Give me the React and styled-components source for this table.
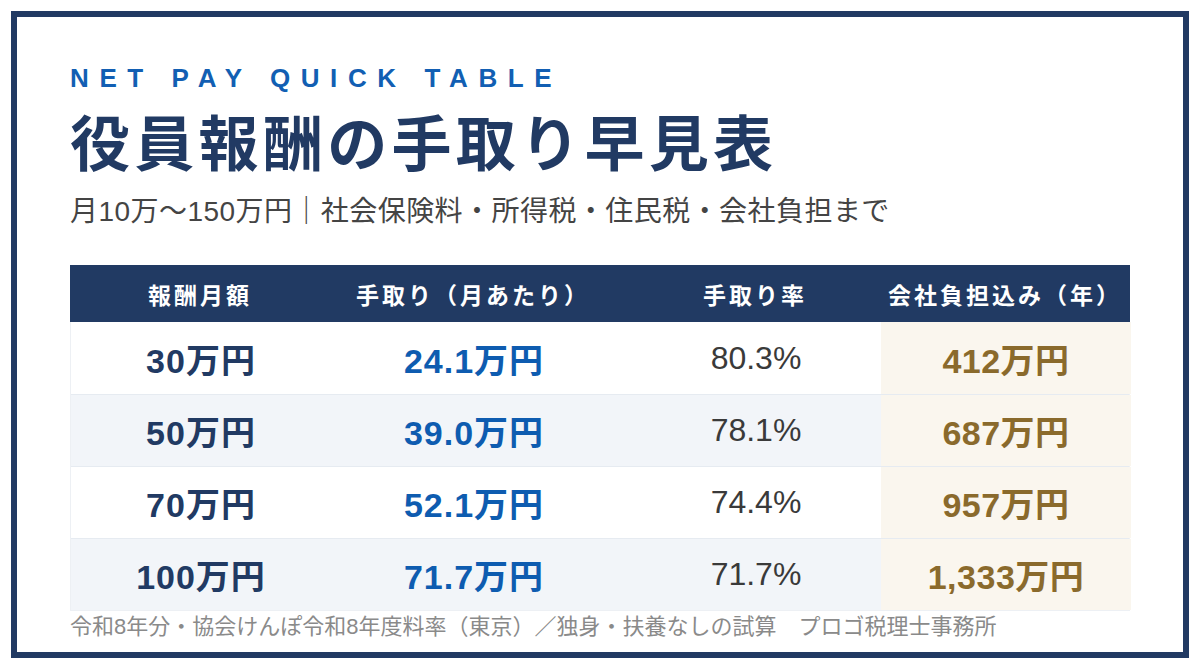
import React from "react";
import styled, { createGlobalStyle } from "styled-components";

const Global = createGlobalStyle`
  html, body { margin: 0; padding: 0; background: #ffffff; }
  body { font-family: "Liberation Sans", "Noto Sans CJK JP", sans-serif; }
`;

const Page = styled.div`
  box-sizing: border-box;
  width: 1200px;
  height: 670px;
  padding: 11px 11px 12px 11px;
  background: #ffffff;
`;

const Frame = styled.div`
  box-sizing: border-box;
  width: 1178px;
  height: 647px;
  border: 6px solid #213a63;
  padding: 46px 53px 0 53px;
  display: flex;
  flex-direction: column;
  background: #ffffff;
`;

const Eyebrow = styled.div`
  font-family: "Liberation Sans", "Noto Sans CJK JP", sans-serif;
  font-weight: 700;
  font-size: 26px;
  line-height: 30px;
  letter-spacing: 10.6px;
  color: #125fb3;
`;

const Title = styled.h1`
  margin: 12px 0 0 0;
  font-family: "Noto Sans CJK JP", sans-serif;
  font-weight: 700;
  font-size: 60px;
  line-height: 70px;
  letter-spacing: 4.3px;
  color: #213a63;
`;

const Subtitle = styled.p`
  margin: 19px 0 0 0;
  font-family: "Liberation Sans", "Noto Sans CJK JP", sans-serif;
  font-size: 28px;
  line-height: 36px;
  letter-spacing: 0.45px;
  color: #444444;
`;

const Table = styled.div`
  margin-top: 35px;
  width: 1060px;
  display: flex;
  flex-direction: column;
`;

const cols = "260px 286px 264px 250px";

const HeadRow = styled.div`
  display: grid;
  grid-template-columns: ${cols};
  height: 57px;
  background: #213a63;
`;

const HeadCell = styled.div`
  display: flex;
  align-items: center;
  justify-content: center;
  padding-left: ${(p) => p.$shift || 0}px;
  font-family: "Noto Sans CJK JP", sans-serif;
  font-weight: 700;
  font-size: 23px;
  letter-spacing: 3px;
  color: #ffffff;
`;

const Body = styled.div`
  border-left: 1px solid #edf0f4;
  border-right: 1px solid #edf0f4;
  border-bottom: 1px solid #edf0f4;
`;

const Row = styled.div`
  display: grid;
  grid-template-columns: ${cols};
  height: 72px;
  box-sizing: border-box;
  background: ${(p) => (p.$alt ? "#f2f5f9" : "#ffffff")};
  border-top: ${(p) => (p.$first ? "none" : "1px solid #e6ebf1")};
`;

const tones = {
  base: { color: "#213a63", weight: 700, size: 34, spacing: 1 },
  net: { color: "#0e5cb0", weight: 700, size: 34, spacing: 1 },
  rate: { color: "#3a3a3a", weight: 400, size: 32, spacing: 0 },
  cost: { color: "#8a6a2c", weight: 700, size: 34, spacing: 0.5 },
};

const Cell = styled.div`
  display: flex;
  align-items: center;
  justify-content: center;
  padding-left: ${(p) => p.$shift || 0}px;
  background: ${(p) => (p.$tone === "cost" ? "#faf6ee" : "transparent")};
  font-family: "Liberation Sans", "Noto Sans CJK JP", sans-serif;
  font-weight: ${(p) => tones[p.$tone].weight};
  font-size: ${(p) => tones[p.$tone].size}px;
  letter-spacing: ${(p) => tones[p.$tone].spacing}px;
  color: ${(p) => tones[p.$tone].color};
`;

const Note = styled.p`
  margin: 2px 0 0 0;
  font-family: "Liberation Sans", "Noto Sans CJK JP", sans-serif;
  font-size: 22px;
  line-height: 28px;
  color: #8a8a8a;
`;

const rows = [
  ["30万円", "24.1万円", "80.3%", "412万円"],
  ["50万円", "39.0万円", "78.1%", "687万円"],
  ["70万円", "52.1万円", "74.4%", "957万円"],
  ["100万円", "71.7万円", "71.7%", "1,333万円"],
];

const heads = ["報酬月額", "手取り（月あたり）", "手取り率", "会社負担込み（年）"];
const toneOrder = ["base", "net", "rate", "cost"];
const shifts = [0, 0, 14, 0];

export default function App() {
  return (
    <>
      <Global />
      <Page>
        <Frame>
          <Eyebrow>NET PAY QUICK TABLE</Eyebrow>
          <Title>役員報酬の手取り早見表</Title>
          <Subtitle>月10万〜150万円｜社会保険料・所得税・住民税・会社負担まで</Subtitle>
          <Table>
            <HeadRow>
              {heads.map((h, i) => (
                <HeadCell key={h} $shift={shifts[i]}>{h}</HeadCell>
              ))}
            </HeadRow>
            <Body>
              {rows.map((r, ri) => (
                <Row key={ri} $alt={ri % 2 === 1} $first={ri === 0}>
                  {r.map((v, ci) => (
                    <Cell key={ci} $tone={toneOrder[ci]} $shift={shifts[ci]}>
                      {v}
                    </Cell>
                  ))}
                </Row>
              ))}
            </Body>
          </Table>
          <Note>令和8年分・協会けんぽ令和8年度料率（東京）／独身・扶養なしの試算　プロゴ税理士事務所</Note>
        </Frame>
      </Page>
    </>
  );
}
